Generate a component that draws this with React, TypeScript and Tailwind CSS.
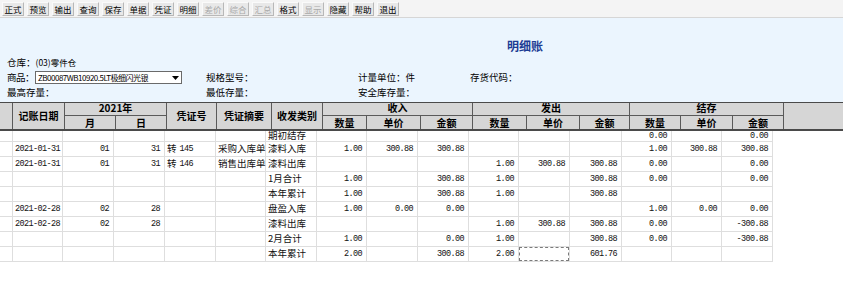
import React from "react";

const cjk = '"Noto Sans CJK SC", "Noto Sans", sans-serif';
const mono = '"Liberation Mono", "Noto Sans CJK SC", monospace';

const tools: [string, boolean][] = [
  ["正式", true], ["预览", true], ["输出", true], ["查询", true], ["保存", true], ["单据", true],
  ["凭证", true], ["明细", true], ["差价", false], ["综合", false], ["汇总", false], ["格式", true],
  ["显示", false], ["隐藏", true], ["帮助", true], ["退出", true],
];

const bodyW = [
  "w-[13px]", "w-[50px]", "w-[51px]", "w-[51px]", "w-[51px]", "w-[50px]", "w-[51px]", "w-[50px]",
  "w-[51px]", "w-[51px]", "w-[50px]", "w-[51px]", "w-[52px]", "w-[50px]", "w-[50px]", "w-[51px]",
];
const align = ["l", "m", "r", "r", "v", "c", "c", "r", "r", "r", "r", "r", "r", "r", "r", "r"];

const rows: string[][] = [
  ["", "", "", "", "", "", "期初结存", "", "", "", "", "", "", "0.00", "", "0.00"],
  ["", "2021-01-31", "01", "31", "转 145", "采购入库单", "漆料入库", "1.00", "300.88", "300.88", "", "", "", "1.00", "300.88", "300.88"],
  ["", "2021-01-31", "01", "31", "转 146", "销售出库单", "漆料出库", "", "", "", "1.00", "300.88", "300.88", "0.00", "", "0.00"],
  ["", "", "", "", "", "", "1月合计", "1.00", "", "300.88", "1.00", "", "300.88", "0.00", "", "0.00"],
  ["", "", "", "", "", "", "本年累计", "1.00", "", "300.88", "1.00", "", "300.88", "", "", ""],
  ["", "2021-02-28", "02", "28", "", "", "盘盈入库", "1.00", "0.00", "0.00", "", "", "", "1.00", "0.00", "0.00"],
  ["", "2021-02-28", "02", "28", "", "", "漆料出库", "", "", "", "1.00", "300.88", "300.88", "0.00", "", "-300.88"],
  ["", "", "", "", "", "", "2月合计", "1.00", "", "0.00", "1.00", "", "300.88", "0.00", "", "-300.88"],
  ["", "", "", "", "", "", "本年累计", "2.00", "", "300.88", "2.00", "", "601.76", "", "", ""],
];

function Cell({ text, ci, focus }: { text: string; ci: number; focus: boolean }) {
  const a = align[ci];
  let content: React.ReactNode = null;
  if (text) {
    if (a === "c") {
      content = (
        <span className="text-[9.5px] leading-none" style={{ fontFamily: cjk }}>
          {text}
        </span>
      );
    } else if (a === "v") {
      const [z, n] = text.split(" ");
      content = (
        <span className="flex items-center leading-none">
          <span className="text-[9.5px]" style={{ fontFamily: cjk }}>{z}</span>
          <span className="ml-[3px] text-[8.5px] tracking-[-0.6px]" style={{ fontFamily: mono }}>{n}</span>
        </span>
      );
    } else {
      content = (
        <span className="text-[8.5px] leading-none tracking-[-0.6px]" style={{ fontFamily: mono }}>
          {text}
        </span>
      );
    }
  }
  return (
    <div
      className={
        bodyW[ci] +
        " relative flex h-full shrink-0 items-center whitespace-nowrap border-r border-[#dedede] text-[#111] " +
        (a === "r" ? "justify-end pr-[4px]" : "justify-start pl-[2px]")
      }
    >
      {content}
      {focus && <div className="absolute inset-0 border border-dashed border-[#7a7a7a]" />}
    </div>
  );
}

function HCell({ w, children, full }: { w: string; children?: React.ReactNode; full?: boolean }) {
  return (
    <div
      className={
        w +
        " flex shrink-0 items-center justify-center border-r border-[#5a5a5a] text-[10px] font-bold leading-none text-black " +
        (full ? "h-full" : "h-[13px]")
      }
      style={{ fontFamily: cjk }}
    >
      {children}
    </div>
  );
}

function Group({ w, title, subs }: { w: string; title: string; subs: [string, string][] }) {
  return (
    <div className={w + " flex h-full shrink-0 flex-col"}>
      <div
        className="flex h-[13px] items-center justify-center border-b border-r border-[#5a5a5a] pb-[2px] text-[10px] font-bold leading-none text-black"
        style={{ fontFamily: cjk }}
      >
        {title}
      </div>
      <div className="flex h-[13px]">
        {subs.map(([sw, t]) => (
          <HCell key={t + sw} w={sw}>
            {t}
          </HCell>
        ))}
      </div>
    </div>
  );
}

export default function App() {
  return (
    <div className="h-[286px] w-[843px] overflow-hidden bg-white" style={{ fontFamily: cjk }}>
      {/* toolbar */}
      <div className="flex h-[18px] items-start gap-[3px] border-b border-[#d6d6d6] bg-[#f4f4f4] pl-[2px] pt-[2px]">
        {tools.map(([t, en]) => (
          <div
            key={t}
            className={
              "flex h-[14px] w-[22px] items-center justify-center border border-b-[#b8b8b8] border-l-[#fafafa] border-r-[#b8b8b8] border-t-[#fafafa] bg-[#e8e8e8] text-[8.5px] leading-none " +
              (en ? "text-black" : "text-[#a8a8a8]")
            }
          >
            {t}
          </div>
        ))}
      </div>

      {/* info area */}
      <div className="flex h-[84px] flex-col whitespace-nowrap bg-[#ebf5fe] text-[9.5px] leading-none text-black">
        <div className="mt-[22px] flex h-[12px] items-center justify-center pl-[207px]">
          <span className="text-[12px] font-bold text-[#1c3c94]">明细账</span>
        </div>
        <div className="mt-[3px] flex h-[15px] items-center pl-[7px]">
          <span>仓库：</span>
          <span className="text-[8.5px]">(03)零件仓</span>
        </div>
        <div className="flex h-[15px] items-center pl-[7px]">
          <span className="w-[28px] shrink-0 tracking-[-0.5px]">商品：</span>
          <div className="flex h-[13px] w-[147px] shrink-0 items-center border border-[#6a6a6a] bg-white pl-[2px]">
            <span className="flex-1 whitespace-nowrap text-[8px] tracking-[-0.5px]">
              ZB00087WB10920.5LT极细闪光银
            </span>
            <div className="flex h-full w-[12px] shrink-0 items-center justify-center">
              <svg width="7" height="4" viewBox="0 0 7 4">
                <path d="M0 0 L7 0 L3.5 4 Z" fill="#000" />
              </svg>
            </div>
          </div>
          <span className="ml-[24px] w-[152px] shrink-0">规格型号：</span>
          <span className="w-[112px] shrink-0">计量单位：件</span>
          <span>存货代码：</span>
        </div>
        <div className="flex h-[15px] items-center pl-[7px]">
          <span className="w-[199px] shrink-0">最高存量：</span>
          <span className="w-[152px] shrink-0">最低存量：</span>
          <span>安全库存量：</span>
        </div>
      </div>

      {/* table header */}
      <div className="flex h-[29px] border-b-2 border-t border-[#4a4a4a] bg-[#d6d6d6]">
        <HCell w="w-[13px]" full />
        <HCell w="w-[52px]" full>记账日期</HCell>
        <Group w="w-[102px]" title="2021年" subs={[["w-[51px]", "月"], ["w-[51px]", "日"]]} />
        <HCell w="w-[50px]" full>凭证号</HCell>
        <HCell w="w-[55px]" full>凭证摘要</HCell>
        <HCell w="w-[51px]" full>收发类别</HCell>
        <Group w="w-[150px]" title="收入" subs={[["w-[44px]", "数量"], ["w-[54px]", "单价"], ["w-[52px]", "金额"]]} />
        <Group w="w-[157px]" title="发出" subs={[["w-[54px]", "数量"], ["w-[53px]", "单价"], ["w-[50px]", "金额"]]} />
        <Group w="w-[154px]" title="结存" subs={[["w-[51px]", "数量"], ["w-[52px]", "单价"], ["w-[51px]", "金额"]]} />
        <div className="flex-1" />
      </div>

      {/* body */}
      <div className="flex w-[773px] flex-col">
        {rows.map((r, ri) => (
          <div
            key={ri}
            className={"flex border-b border-[#dedede] " + (ri === 0 ? "h-[11px]" : "h-[15px]")}
          >
            {r.map((t, ci) => (
              <Cell key={ci} text={t} ci={ci} focus={ri === 8 && ci === 11} />
            ))}
          </div>
        ))}
      </div>
    </div>
  );
}
